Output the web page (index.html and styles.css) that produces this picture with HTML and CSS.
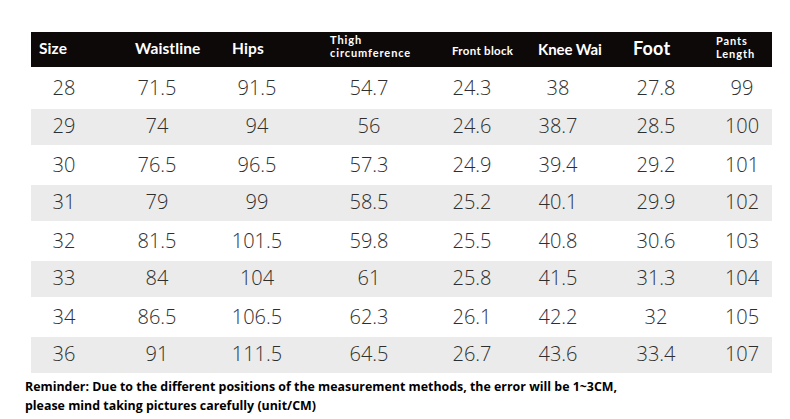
FILE: index.html
```html
<!DOCTYPE html>
<html>
<head>
<meta charset="utf-8">
<link rel="stylesheet" href="styles.css">
</head>
<body>
<div class="page">
  <div class="table">
    <div class="row head">
      <div class="cell h1"><span class="t16">Size</span></div>
      <div class="cell h2"><span class="t16">Waistline</span></div>
      <div class="cell h3"><span class="t16">Hips</span></div>
      <div class="cell h4"><span class="t11">Thigh</span><span class="t11">circumference</span></div>
      <div class="cell h5"><span class="t12">Front block</span></div>
      <div class="cell h6"><span class="t15">Knee Wai</span></div>
      <div class="cell h7"><span class="t19">Foot</span></div>
      <div class="cell h8"><span class="t11">Pants</span><span class="t11">Length</span></div>
    </div>
    <div class="row first"><div class="cell">28</div><div class="cell">71.5</div><div class="cell">91.5</div><div class="cell">54.7</div><div class="cell">24.3</div><div class="cell">38</div><div class="cell">27.8</div><div class="cell last">99</div></div>
    <div class="row gray"><div class="cell">29</div><div class="cell">74</div><div class="cell">94</div><div class="cell">56</div><div class="cell">24.6</div><div class="cell">38.7</div><div class="cell">28.5</div><div class="cell last">100</div></div>
    <div class="row white"><div class="cell">30</div><div class="cell">76.5</div><div class="cell">96.5</div><div class="cell">57.3</div><div class="cell">24.9</div><div class="cell">39.4</div><div class="cell">29.2</div><div class="cell last">101</div></div>
    <div class="row gray"><div class="cell">31</div><div class="cell">79</div><div class="cell">99</div><div class="cell">58.5</div><div class="cell">25.2</div><div class="cell">40.1</div><div class="cell">29.9</div><div class="cell last">102</div></div>
    <div class="row white"><div class="cell">32</div><div class="cell">81.5</div><div class="cell">101.5</div><div class="cell">59.8</div><div class="cell">25.5</div><div class="cell">40.8</div><div class="cell">30.6</div><div class="cell last">103</div></div>
    <div class="row gray"><div class="cell">33</div><div class="cell">84</div><div class="cell">104</div><div class="cell">61</div><div class="cell">25.8</div><div class="cell">41.5</div><div class="cell">31.3</div><div class="cell last">104</div></div>
    <div class="row white"><div class="cell">34</div><div class="cell">86.5</div><div class="cell">106.5</div><div class="cell">62.3</div><div class="cell">26.1</div><div class="cell">42.2</div><div class="cell">32</div><div class="cell last">105</div></div>
    <div class="row gray"><div class="cell">36</div><div class="cell">91</div><div class="cell">111.5</div><div class="cell">64.5</div><div class="cell">26.7</div><div class="cell">43.6</div><div class="cell">33.4</div><div class="cell last">107</div></div>
  </div>
  <p class="note">Reminder: Due to the different positions of the measurement methods, the error will be 1~3CM,<br>please mind taking pictures carefully (unit/CM)</p>
</div>
</body>
</html>
```

FILE: styles.css
```css
* { box-sizing: border-box; }
html, body { margin: 0; padding: 0; background: #ffffff; }
.page {
  width: 790px;
  height: 419px;
  padding: 32px 0 0 25px;
  font-family: "Open Sans", "DejaVu Sans", sans-serif;
  overflow: hidden;
}
.table {
  margin-left: 6px;
  width: 741px;
}
.row {
  display: grid;
  grid-template-columns: 66px 120px 80px 144px 62px 110px 86px 73px;
  align-items: center;
}
.row .cell {
  text-align: center;
  font-size: 20px;
  font-weight: 300;
  color: #2e2e2e;
  white-space: nowrap;
  line-height: 24px;
}
.row .cell.last { padding-left: 13px; }
.first { height: 42px; }
.white { height: 40px; }
.gray { height: 36px; background: #ebebeb; }
.gray .cell { padding-bottom: 3px; }

.head {
  height: 35px;
  background: #0d0909;
  color: #ffffff;
}
.head .cell {
  text-align: left;
  color: #ffffff;
  font-family: "Lato", "Open Sans", sans-serif;
  font-weight: 700;
  padding-bottom: 6px;
  line-height: 1;
}
.t16 { font-size: 15.5px; letter-spacing: 0.1px; }
.t15 { font-size: 15px; letter-spacing: -0.1px; }
.t19 { font-size: 18px; letter-spacing: 0.2px; }
.t12 { font-size: 11.5px; letter-spacing: 0.3px; }
.t11 { font-size: 11px; letter-spacing: 0.9px; line-height: 13px; display: block; }
.head .h1 { padding-left: 8px; }
.head .h2 { padding-left: 38px; }
.head .h3 { padding-left: 15px; }
.head .h4 { padding-left: 33px; padding-bottom: 7px; }
.head .h5 { padding-left: 11px; }
.head .h6 { padding-left: 35px; }
.head .h7 { padding-left: 20px; }
.head .h8 { padding-left: 17px; padding-bottom: 6px; }

.note {
  margin: 4px 0 0 0;
  font-size: 12.4px;
  font-weight: 700;
  line-height: 19px;
  color: #000000;
}
```
